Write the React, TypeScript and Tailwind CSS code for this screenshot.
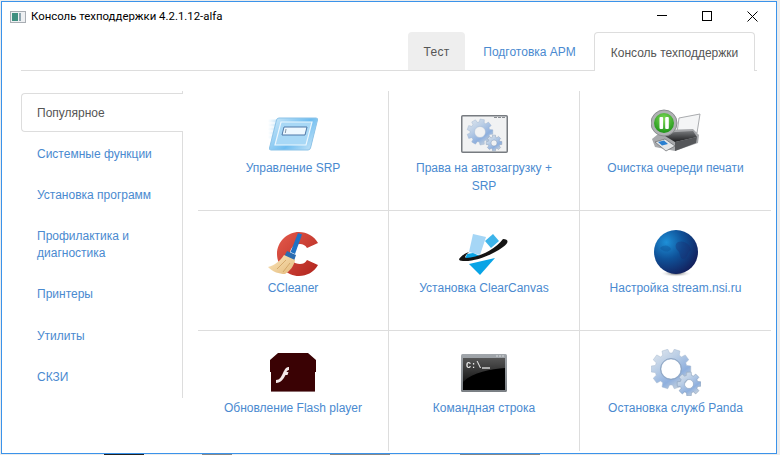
import React from 'react';

const sideItems = ['Популярное', 'Системные функции', 'Установка программ', 'Профилактика и диагностика', 'Принтеры', 'Утилиты', 'СКЗИ'];

// builds a toothed wheel outline for the gear pictures
function gearPath(cx: number, cy: number, outer: number, inner: number, hole: number, teeth: number) {
    let d = '';
    const step = (Math.PI * 2) / teeth;
    for (let i = 0; i < teeth; i++) {
        const a = i * step;
        const pts = [
            [inner, a - step * 0.36],
            [outer, a - step * 0.24],
            [outer, a + step * 0.24],
            [inner, a + step * 0.36],
        ];
        pts.forEach(([r, t], j) => {
            const x = (cx + r * Math.cos(t)).toFixed(2);
            const y = (cy + r * Math.sin(t)).toFixed(2);
            d += `${i === 0 && j === 0 ? 'M' : 'L'}${x} ${y} `;
        });
    }
    d += 'Z ';
    d += `M${cx + hole} ${cy} A${hole} ${hole} 0 1 0 ${cx - hole} ${cy} A${hole} ${hole} 0 1 0 ${cx + hole} ${cy} Z`;
    return d;
}

function GearDefs({ id }: { id: string }) {
    return (
        <defs>
            <linearGradient id={id} x1="0" y1="0" x2="0.7" y2="1">
                <stop offset="0" stopColor="#e4e9ee" />
                <stop offset="0.4" stopColor="#bccfe6" />
                <stop offset="0.75" stopColor="#8fb0de" />
                <stop offset="1" stopColor="#c9d3dd" />
            </linearGradient>
        </defs>
    );
}

function SrpIcon() {
    return (
        <svg width="50" height="34" viewBox="0 0 50 34" className="blur-[0.4px]">
            <defs>
                <linearGradient id="srpA" x1="0" y1="0" x2="1" y2="0.6">
                    <stop offset="0" stopColor="#d4ecfa" />
                    <stop offset="0.65" stopColor="#6fbdf0" />
                    <stop offset="1" stopColor="#b3dcf6" />
                </linearGradient>
                <linearGradient id="srpFade" x1="0" y1="0" x2="1" y2="0">
                    <stop offset="0" stopColor="#ffffff" />
                    <stop offset="1" stopColor="#c5e4f8" />
                </linearGradient>
            </defs>
            <path d="M0 4h10M0 8h9M0 12h8M0 16h7M0 20h6" stroke="url(#srpFade)" strokeWidth="3" />
            <path d="M11 1 L48 1 Q50 1 49.5 3 L42.5 31 Q42 33 40 33 L3 33 Q1 33 1.5 31 L8.5 3 Q9 1 11 1 Z" fill="url(#srpA)" stroke="#8cc3e8" />
            <path d="M13 5 L44 5 L38 28 L7 28 Z" fill="#a8d8f6" stroke="#ecf7fe" strokeWidth="1.2" />
            <path d="M16 10 L39 10 L37 18 L14 18 Z" fill="#eef8ff" stroke="#4f79a8" strokeWidth="1" />
            <path d="M18 12 L17.3 16" stroke="#8a9aa8" />
        </svg>
    );
}

function GearWindowIcon() {
    return (
        <svg width="47" height="38" viewBox="0 0 47 38" className="blur-[0.3px]">
            <GearDefs id="gw" />
            <rect x="0.75" y="0.75" width="45.5" height="36.5" rx="1" fill="#f1f2f3" stroke="#777b80" strokeWidth="1.5" />
            <path d="M33 2.5h3M37 2.5h3M41 2.5h3" stroke="#8a8e93" />
            <path d={gearPath(19, 17, 13, 10, 5.5, 9)} fill="url(#gw)" fillRule="evenodd" stroke="#9ab0cc" strokeWidth="0.4" />
            <path d={gearPath(33, 28, 8, 6, 3, 8)} fill="url(#gw)" fillRule="evenodd" stroke="#7d93ad" strokeWidth="0.4" />
        </svg>
    );
}

function PrinterIcon() {
    return (
        <svg width="50" height="43" viewBox="0 0 50 43" className="blur-[0.4px]">
            <defs>
                <linearGradient id="prBody" x1="0" y1="0" x2="0" y2="1">
                    <stop offset="0" stopColor="#77797c" />
                    <stop offset="1" stopColor="#1b1c1e" />
                </linearGradient>
                <radialGradient id="prGreen" cx="0.5" cy="0.3" r="0.8">
                    <stop offset="0" stopColor="#7ed957" />
                    <stop offset="1" stopColor="#118a10" />
                </radialGradient>
            </defs>
            <path d="M28 9 L49 5 L46 24 L26 24 Z" fill="#f4f5f6" stroke="#a9abae" />
            <path d="M1 30 L12 21 L42 20 L48 26 L47 34 L24 42 L4 38 Z" fill="#a7a9ac" />
            <path d="M9 24 L42 22 L46 28 L24 33 Z" fill="url(#prBody)" />
            <path d="M24 33 L46 28 L45 34 L24 42 Z" fill="#55575a" />
            <path d="M4 33 L14 30 L24 37 L15 42 Z" fill="#e4e6e8" stroke="#66686b" strokeWidth="0.7" />
            <path d="M7 33 L13 31.5 L17 35 L11 36.5 Z" fill="#2a7fd0" />
            <circle cx="13" cy="14" r="13" fill="#b0b2b4" stroke="#8a8c8f" />
            <circle cx="13" cy="14" r="10" fill="url(#prGreen)" />
            <rect x="8.5" y="8" width="3.6" height="12" rx="1" fill="#fff" />
            <rect x="14.2" y="8" width="3.6" height="12" rx="1" fill="#fff" />
        </svg>
    );
}

function CCleanerIcon() {
    return (
        <svg width="50" height="44" viewBox="0 0 50 44" className="blur-[0.3px]">
            <defs>
                <linearGradient id="ccRed" x1="0" y1="0" x2="1" y2="1">
                    <stop offset="0" stopColor="#e55b4c" />
                    <stop offset="1" stopColor="#b0241d" />
                </linearGradient>
                <linearGradient id="ccBrush" x1="0" y1="0" x2="1" y2="1">
                    <stop offset="0" stopColor="#fbe6bd" />
                    <stop offset="1" stopColor="#e4bb7c" />
                </linearGradient>
            </defs>
            <path d="M50 11 C46 4 39 0 31 0 C19 0 9 10 9 22 C9 34 19 44 31 44 C39 44 46 40 50 33 L39 28 C37 31 35 32 32 32 C26 32 22 28 22 22 C22 16 26 12 32 12 C35 12 37 13 39 16 Z" fill="url(#ccRed)" />
            <path d="M30 1 L34 2.5 L27 22 L22.5 20 Z" fill="#1f72c4" />
            <path d="M19 19 L28 23 L26 29 L16 25 Z" fill="#2b6cb0" />
            <path d="M16 23 L27 28 C26 34 22 39 17 42 C11 42 5 40 0 35 C7 33 12 29 16 23 Z" fill="url(#ccBrush)" />
            <path d="M9 37 L18 28M15 40 L22 31" stroke="#c9995a" strokeWidth="0.7" />
        </svg>
    );
}

function ClearCanvasIcon() {
    return (
        <svg width="50" height="42" viewBox="0 0 50 42" className="blur-[0.2px]">
            <path d="M14 1 L27 4 L21 22 L10 19 Z" fill="#a5d6f6" />
            <path d="M34 1 L40 8 L32 15 L26 8 Z" fill="#3db4ea" />
            <path d="M8 21 L14 20 L21 23 L11 27 L6 26 Z" fill="#08a4e6" />
            <path d="M10 31 L36 25 L21 42 Z" fill="#08a4e6" />
            <path d="M0 26 C3 22 7 20 10 19 C7 22 5 24 7 25 C20 24 36 17 44 6 C50 6 50 10 44 14 C32 23 14 29 4 28 C1 28 0 27 0 26 Z" fill="#141414" />
        </svg>
    );
}

function GlobeIcon() {
    return (
        <svg width="44" height="47" viewBox="0 0 44 47" className="blur-[0.4px]">
            <defs>
                <radialGradient id="globe" cx="0.28" cy="0.28" r="0.85">
                    <stop offset="0" stopColor="#1e90d8" />
                    <stop offset="0.45" stopColor="#0f5299" />
                    <stop offset="1" stopColor="#141a55" />
                </radialGradient>
                <radialGradient id="globeShadow" cx="0.5" cy="0.5" r="0.5">
                    <stop offset="0" stopColor="#555" />
                    <stop offset="1" stopColor="#fff" stopOpacity="0" />
                </radialGradient>
            </defs>
            <ellipse cx="22" cy="43.5" rx="16" ry="3.5" fill="url(#globeShadow)" />
            <circle cx="22" cy="22" r="22" fill="url(#globe)" />
            <path d="M24 12 C30 10 36 14 37 20 C33 22 34 28 29 29 C25 28 27 22 23 20 C21 17 21 14 24 12 Z" fill="#1a2a6c" opacity="0.35" />
            <path d="M6 18 C10 14 15 15 17 19 C14 23 9 22 6 18 Z" fill="#0c4b90" opacity="0.35" />
        </svg>
    );
}

function FlashIcon() {
    return (
        <svg width="46" height="39" viewBox="0 0 46 39" className="blur-[0.3px]">
            <path d="M8 0 L38 0 L46 7 L46 19 L45 19 L45 38 L1 38 L1 19 L0 19 L0 7 Z" fill="#3a0204" />
            <path d="M1 38.5 L45 38.5" stroke="#8b6c6e" strokeWidth="1" />
            <path d="M6 27 C10 27 11 24 13 20 C15 16 16 14 19 14 L19 17 C17.5 17 17 18 16.5 19 L18.5 19 L17.5 22 L15.5 22 C13.5 26 11 30 6 30 Z" fill="#f3e7e7" />
        </svg>
    );
}

function CmdIcon() {
    return (
        <svg width="46" height="38" viewBox="0 0 46 38" className="blur-[0.2px]">
            <defs>
                <linearGradient id="cmdFrame" x1="0" y1="0" x2="0" y2="1">
                    <stop offset="0" stopColor="#a1a6ab" />
                    <stop offset="1" stopColor="#7a7f84" />
                </linearGradient>
                <linearGradient id="cmdGlass" x1="0" y1="0" x2="0" y2="1">
                    <stop offset="0" stopColor="#565656" />
                    <stop offset="1" stopColor="#161616" />
                </linearGradient>
            </defs>
            <rect x="0" y="0" width="46" height="38" rx="1.5" fill="url(#cmdFrame)" />
            <rect x="2" y="4" width="42" height="32" fill="#000" />
            <path d="M2 4 H44 V14 C30 15 12 18 2 28 Z" fill="url(#cmdGlass)" />
            <path d="M35 2h2M38 2h2M41 2h2" stroke="#d5d8db" />
            <text x="5" y="13.5" fontSize="8.5" fontWeight="bold" fontFamily="'Liberation Mono', monospace" fill="#e8e8e8">C:\</text>
            <path d="M21 14 h8" stroke="#e8e8e8" strokeWidth="1.3" />
        </svg>
    );
}

function GearsIcon() {
    return (
        <svg width="50" height="47" viewBox="0 0 50 47" className="blur-[0.3px]">
            <GearDefs id="gs" />
            <path d={gearPath(20, 20, 20, 16, 10, 10)} fill="url(#gs)" fillRule="evenodd" stroke="#a6b8cf" strokeWidth="0.5" />
            <circle cx="20" cy="20" r="10.5" fill="none" stroke="#8ea6c4" strokeWidth="1" />
            <path d={gearPath(38, 35, 12, 9, 4.5, 8)} fill="url(#gs)" fillRule="evenodd" stroke="#7f96b2" strokeWidth="0.5" />
        </svg>
    );
}

const cells: { label: string; icon: React.ReactNode; top: string }[] = [
    { label: 'Управление SRP', icon: <SrpIcon />, top: 'pt-[26px]' },
    { label: 'Права на автозагрузку + SRP', icon: <GearWindowIcon />, top: 'pt-[24px]' },
    { label: 'Очистка очереди печати', icon: <PrinterIcon />, top: 'pt-[18px]' },
    { label: 'CCleaner', icon: <CCleanerIcon />, top: 'pt-[21px]' },
    { label: 'Установка ClearCanvas', icon: <ClearCanvasIcon />, top: 'pt-[22px]' },
    { label: 'Настройка stream.nsi.ru', icon: <GlobeIcon />, top: 'pt-[19px]' },
    { label: 'Обновление Flash player', icon: <FlashIcon />, top: 'pt-[22px]' },
    { label: 'Командная строка', icon: <CmdIcon />, top: 'pt-[23px]' },
    { label: 'Остановка служб Panda', icon: <GearsIcon />, top: 'pt-[18px]' },
];

export default function App() {
    return (
        <div className="w-[780px] h-[455px] overflow-hidden bg-[#ececec] pt-[1px] pl-[1px] font-['Liberation_Sans',sans-serif] text-[12px]">
            <div className="flex flex-col w-[776px] h-[453px] border border-[#3b93ea] bg-white overflow-hidden">
                {/* title bar */}
                <div className="flex items-center h-[30px] shrink-0 pl-[8px] pr-[18px]">
                    <svg width="16" height="12" viewBox="0 0 16 12" className="mr-[5px] -mt-[1px]">
                        <rect x="0.5" y="0.5" width="15" height="11" fill="#eef0f2" stroke="#a8adb3" />
                        <rect x="2" y="2" width="6" height="8" fill="#3f8f80" />
                        <rect x="9" y="2" width="2" height="8" fill="#8fa5b0" />
                    </svg>
                    <span className="font-['Roboto',sans-serif] text-[11.4px] text-black">Консоль техподдержки 4.2.1.12-alfa</span>
                    <div className="flex items-center ml-auto mb-[2px] gap-[35px]">
                        <svg width="10" height="10" viewBox="0 0 10 10"><path d="M0 4.5H10" stroke="#000" /></svg>
                        <svg width="10" height="10" viewBox="0 0 10 10"><rect x="0.5" y="0.5" width="9" height="9" fill="none" stroke="#000" /></svg>
                        <svg width="11" height="11" viewBox="0 0 11 11"><path d="M0.5 0.5L10.5 10.5M10.5 0.5L0.5 10.5" stroke="#000" /></svg>
                    </div>
                </div>

                {/* top tabs */}
                <div className="flex justify-end items-end gap-[2px] h-[39px] shrink-0 ml-[19px] mr-[19px] pr-[2px] border-b border-[#dddddd]">
                    <div className="flex items-center justify-center w-[57px] h-[38px] pt-[1px] rounded-t-[4px] bg-[#eeeeee] text-[#555555] tracking-[0.3px]">Тест</div>
                    <div className="flex items-center justify-center w-[125px] h-[38px] pt-[1px] text-[#4a8ad0]">Подготовка АРМ</div>
                    <div className="flex items-center justify-center w-[161px] h-[39px] pt-[1px] -mb-px rounded-t-[4px] border border-b-0 border-[#dddddd] bg-white text-[#555555]">Консоль техподдержки</div>
                </div>

                <div className="flex mt-[20px] ml-[19px] min-h-0 flex-1">
                    {/* side tabs */}
                    <div className="w-[162px] h-[307px] shrink-0 pt-[2px] border-r border-[#dddddd]">
                        {sideItems.map((item, i) => (
                            <div
                                key={item}
                                className={
                                    i === 0
                                        ? 'relative -mr-px mb-[2px] pt-[11px] pb-[9px] px-[15px] leading-[17px] rounded-l-[4px] border border-r-0 border-[#dddddd] bg-white text-[#555555]'
                                        : `${i === 4 ? 'mb-[3px]' : 'mb-[2px]'} pt-[11px] pb-[9px] px-[15px] leading-[17px] border border-transparent text-[#4a8ad0]`
                                }
                            >
                                {item}
                            </div>
                        ))}
                    </div>

                    {/* tool grid */}
                    <div className="grid grid-cols-[191px_191px_191px] grid-rows-[120px_120px_120px] ml-[15px] h-[360px]">
                        {cells.map((cell, i) => (
                            <div
                                key={i}
                                className={`flex flex-col items-center border-[#dddddd] ${i % 3 < 2 ? 'border-r' : ''} ${i < 6 ? 'border-b' : ''}`}
                            >
                                <div className={`flex items-start justify-center h-[68px] shrink-0 ${cell.top}`}>{cell.icon}</div>
                                <div className="px-[20px] leading-[18px] text-center text-[#4a8ad0]">{cell.label}</div>
                            </div>
                        ))}
                    </div>
                </div>
            </div>
            {/* the tops of the text in the window behind */}
            <div className="flex h-[1px] overflow-hidden">
                <div className="ml-[103px] w-[40px] bg-[#222222]" />
                <div className="ml-[58px] w-[30px] bg-[#888888]" />
                <div className="ml-[98px] w-[60px] bg-[#888888]" />
                <div className="ml-[70px] w-[80px] bg-[#888888]" />
            </div>
        </div>
    );
}
